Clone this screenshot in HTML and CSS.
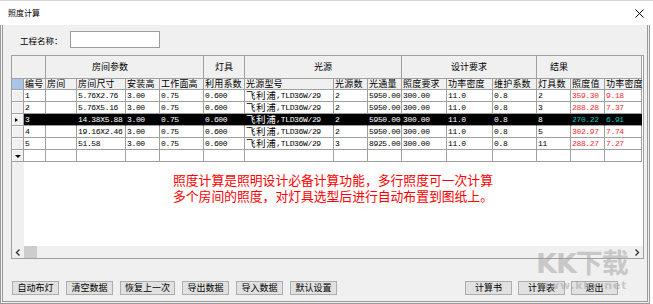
FILE: index.html
```html
<!DOCTYPE html>
<html lang="zh-CN">
<head>
    <meta charset="UTF-8">
    <title>照度计算</title>
    <link rel="stylesheet" href="styles.css">
</head>
<body>
    <div class="window">
        <div class="titlebar">
            <span class="title">照度计算</span>
            <svg class="close" width="9" height="9" viewBox="0 0 9 9">
                <path d="M0.5 0.5 L8.5 8.5 M8.5 0.5 L0.5 8.5" stroke="#000" stroke-width="1" fill="none"/>
            </svg>
        </div>

        <div class="client">
            <div class="project-row">
                <label class="project-label" for="projectName">工程名称：</label>
                <input class="project-input" id="projectName" type="text">
            </div>

            <div class="grid">
                <div class="grid-table">
                    <div class="c gh span2"></div>
                    <div class="c gh span4 gh-room">房间参数</div>
                    <div class="c gh">灯具</div>
                    <div class="c gh span3">光源</div>
                    <div class="c gh span3">设计要求</div>
                    <div class="c gh span3 gh-result">结果</div>

                    <div class="c rh rh-corner"></div>
                    <div class="c ch">编号</div>
                    <div class="c ch">房间</div>
                    <div class="c ch">房间尺寸</div>
                    <div class="c ch">安装高</div>
                    <div class="c ch">工作面高</div>
                    <div class="c ch">利用系数</div>
                    <div class="c ch">光源型号</div>
                    <div class="c ch">光源数</div>
                    <div class="c ch">光通量</div>
                    <div class="c ch">照度要求</div>
                    <div class="c ch">功率密度</div>
                    <div class="c ch">维护系数</div>
                    <div class="c ch">灯具数</div>
                    <div class="c ch">照度值</div>
                    <div class="c ch">功率密度</div>

                    <div class="row">
                        <div class="c rh"></div>
                        <div class="c">1</div><div class="c"></div><div class="c">5.76X2.76</div>
                        <div class="c">3.00</div><div class="c">0.75</div><div class="c">0.600</div>
                        <div class="c"><span class="cn">飞利浦</span>,TLD36W/29</div>
                        <div class="c">2</div><div class="c">5950.00</div><div class="c">300.00</div>
                        <div class="c">11.0</div><div class="c">0.8</div><div class="c">2</div>
                        <div class="c res">359.30</div><div class="c res">9.18</div>
                    </div>
                    <div class="row">
                        <div class="c rh"></div>
                        <div class="c">2</div><div class="c"></div><div class="c">5.76X5.16</div>
                        <div class="c">3.00</div><div class="c">0.75</div><div class="c">0.600</div>
                        <div class="c"><span class="cn">飞利浦</span>,TLD36W/29</div>
                        <div class="c">2</div><div class="c">5950.00</div><div class="c">300.00</div>
                        <div class="c">11.0</div><div class="c">0.8</div><div class="c">3</div>
                        <div class="c res">288.28</div><div class="c res">7.37</div>
                    </div>
                    <div class="row sel">
                        <div class="c rh"><span class="tri-right"></span></div>
                        <div class="c">3</div><div class="c"></div><div class="c">14.38X5.88</div>
                        <div class="c">3.00</div><div class="c">0.75</div><div class="c">0.600</div>
                        <div class="c"><span class="cn">飞利浦</span>,TLD36W/29</div>
                        <div class="c">2</div><div class="c">5950.00</div><div class="c">300.00</div>
                        <div class="c">11.0</div><div class="c">0.8</div><div class="c">8</div>
                        <div class="c res">270.22</div><div class="c res">6.91</div>
                    </div>
                    <div class="row">
                        <div class="c rh"></div>
                        <div class="c">4</div><div class="c"></div><div class="c">19.16X2.46</div>
                        <div class="c">3.00</div><div class="c">0.75</div><div class="c">0.600</div>
                        <div class="c"><span class="cn">飞利浦</span>,TLD36W/29</div>
                        <div class="c">2</div><div class="c">5950.00</div><div class="c">300.00</div>
                        <div class="c">11.0</div><div class="c">0.8</div><div class="c">5</div>
                        <div class="c res">302.97</div><div class="c res">7.74</div>
                    </div>
                    <div class="row">
                        <div class="c rh"></div>
                        <div class="c">5</div><div class="c"></div><div class="c">51.58</div>
                        <div class="c">3.00</div><div class="c">0.75</div><div class="c">0.600</div>
                        <div class="c"><span class="cn">飞利浦</span>,TLD36W/29</div>
                        <div class="c">3</div><div class="c">8925.00</div><div class="c">300.00</div>
                        <div class="c">11.0</div><div class="c">0.8</div><div class="c">11</div>
                        <div class="c res">288.27</div><div class="c res">7.27</div>
                    </div>
                    <div class="row">
                        <div class="c rh"><span class="tri-down"></span></div>
                        <div class="c"></div><div class="c"></div><div class="c"></div>
                        <div class="c"></div><div class="c"></div><div class="c"></div>
                        <div class="c"></div><div class="c"></div><div class="c"></div>
                        <div class="c"></div><div class="c"></div><div class="c"></div>
                        <div class="c"></div><div class="c"></div><div class="c"></div>
                    </div>
                </div>

                <div class="grid-empty">
                    <div class="row-strip"></div>
                    <div class="note">
                        <p>照度计算是照明设计必备计算功能，多行照度可一次计算</p>
                        <p>多个房间的照度，对灯具选型后进行自动布置到图纸上。</p>
                    </div>
                </div>

                <div class="hscroll">
                    <div class="scroll-btn">
                        <svg width="6" height="7" viewBox="0 0 6 7"><path d="M4.5 0.5 L1.5 3.5 L4.5 6.5" stroke="#333" stroke-width="1.4" fill="none"/></svg>
                    </div>
                    <div class="scroll-thumb"></div>
                    <div class="scroll-track"></div>
                    <div class="scroll-btn">
                        <svg width="6" height="7" viewBox="0 0 6 7"><path d="M1.5 0.5 L4.5 3.5 L1.5 6.5" stroke="#333" stroke-width="1.4" fill="none"/></svg>
                    </div>
                </div>
            </div>

            <div class="buttons">
                <div class="btn-group">
                    <button class="btn">自动布灯</button>
                    <button class="btn">清空数据</button>
                    <button class="btn btn-wide">恢复上一次</button>
                    <button class="btn">导出数据</button>
                    <button class="btn">导入数据</button>
                    <button class="btn">默认设置</button>
                </div>
                <div class="btn-group btn-group-right">
                    <button class="btn">计算书</button>
                    <button class="btn">计算表</button>
                    <button class="btn">退出</button>
                </div>
            </div>
        </div>

        <div class="watermark">
            <div class="wm-logo">KK下载</div>
            <div class="wm-url">www.kkx.net</div>
        </div>
    </div>
</body>
</html>
```

FILE: styles.css
```css
:root {
    --face: #f0f0f0;
    --line: #a0a0a0;
    --frame: #9a9a9a;
    --btn-bg: #e1e1e1;
    --btn-border: #adadad;
    --result: #ff2a2a;
    --result-sel: #00c0c0;
    --note: #ff0000;
}

html, body {
    margin: 0;
    padding: 0;
    background: #ffffff;
}

body {
    width: 653px;
    height: 304px;
    overflow: hidden;
    font-family: "Noto Sans CJK SC", sans-serif;
    color: #000;
}

.window {
    position: relative;
    width: 653px;
    height: 304px;
    display: flex;
    flex-direction: column;
}

.titlebar {
    height: 25px;
    box-sizing: border-box;
    border-top: 1px solid #d4d4d4;
    display: flex;
    align-items: center;
    justify-content: space-between;
    padding: 0 9px 0 8px;
    background: #ffffff;
}

.title {
    font-size: 8px;
    line-height: 10px;
}

.close {
    display: block;
}

.client {
    flex: 1;
    margin-right: 3px;
    background: var(--face);
    border: 3px double var(--frame);
    border-top: none;
    display: flex;
    flex-direction: column;
    padding-top: 6px;
}

.project-row {
    display: flex;
    align-items: center;
    height: 17px;
    padding-left: 17px;
}

.project-label {
    font-size: 8.5px;
    width: 50px;
    line-height: 10px;
}

.project-input {
    width: 90px;
    height: 17px;
    box-sizing: border-box;
    border: 1px solid #9c9c9c;
    background: #fff;
    padding: 0;
    margin: 0;
}

/* data grid */

.grid {
    margin: 7px 0 0 8px;
    width: 633px;
    height: 204px;
    box-sizing: border-box;
    border: 1px solid var(--line);
    background: #fff;
    display: flex;
    flex-direction: column;
}

.grid-table {
    display: grid;
    grid-template-columns: 12px 22px 31px 49px 34px 44px 41px 89px 34px 34px 45px 46px 44px 34px 34px 37px;
    grid-template-rows: 23px 11px repeat(6, 12px);
}

.row {
    display: contents;
}

.c {
    box-sizing: border-box;
    border-right: 1px solid var(--line);
    border-bottom: 1px solid var(--line);
    padding-left: 1px;
    white-space: nowrap;
    font-family: "Liberation Mono", "Noto Sans CJK SC", monospace;
    font-size: 8px;
    letter-spacing: -0.35px;
    line-height: 11px;
    background: #fff;
}

.cn {
    display: inline-block;
    vertical-align: top;
    font-family: "Noto Sans CJK SC", sans-serif;
    font-size: 9.5px;
    line-height: 11px;
    letter-spacing: 0.6px;
}

.gh {
    background: var(--face);
    font-family: "Noto Sans CJK SC", sans-serif;
    font-size: 9px;
    letter-spacing: 0;
    line-height: 22px;
    text-align: center;
    padding: 0;
}

.span2 { grid-column: span 2; }
.span3 { grid-column: span 3; }
.span4 { grid-column: span 4; }

.gh-room {
    text-align: left;
    padding-left: 46px;
}

.gh-result {
    text-align: left;
    padding-left: 13px;
}

.ch {
    background: var(--face);
    font-family: "Noto Sans CJK SC", sans-serif;
    font-size: 9px;
    letter-spacing: 0.2px;
    line-height: 10px;
}

.rh {
    background: var(--face);
    box-shadow: inset 1px 1px 0 #ffffff;
    padding: 0;
    display: flex;
    align-items: center;
    justify-content: center;
}

.rh-corner {
    background: #a9c6ea;
    box-shadow: none;
}

.res {
    color: var(--result);
}

.sel .c {
    background: #000;
    color: #fff;
    border-right-color: #000;
}

.sel .rh {
    background: var(--face);
    border-right-color: var(--line);
}

.sel .res {
    color: var(--result-sel);
}

.tri-right {
    width: 0;
    height: 0;
    border-top: 2.5px solid transparent;
    border-bottom: 2.5px solid transparent;
    border-left: 3px solid #000;
    margin-left: -2px;
}

.tri-down {
    width: 0;
    height: 0;
    border-left: 3px solid transparent;
    border-right: 3px solid transparent;
    border-top: 3px solid #000;
    margin-top: 2px;
}

.grid-empty {
    flex: 1;
    display: flex;
}

.row-strip {
    width: 12px;
    background: var(--face);
}

.note {
    padding: 10px 0 0 149px;
    color: var(--note);
    font-size: 12.8px;
    line-height: 15.5px;
}

.note p {
    margin: 0;
    white-space: nowrap;
}

.hscroll {
    height: 12px;
    display: flex;
    background: var(--face);
}

.scroll-btn {
    width: 12px;
    display: flex;
    align-items: center;
    justify-content: center;
}

.scroll-thumb {
    width: 13px;
    background: #cdcdcd;
}

.scroll-track {
    flex: 1;
}

/* bottom buttons */

.buttons {
    margin-top: 22px;
    padding-left: 9px;
    padding-right: 29px;
    display: flex;
    justify-content: space-between;
}

.btn-group {
    display: flex;
    gap: 7px;
}

.btn-group-right {
    gap: 6px;
}

.btn {
    width: 47px;
    height: 14px;
    box-sizing: border-box;
    padding: 0;
    margin: 0;
    background: var(--btn-bg);
    border: 1px solid var(--btn-border);
    font-family: "Noto Sans CJK SC", sans-serif;
    font-size: 9px;
    line-height: 12px;
    color: #000;
}

.btn-wide {
    width: 55px;
}

/* site watermark on top of the shot */

.watermark {
    position: absolute;
    left: 536px;
    top: 248px;
    color: rgba(150, 150, 150, 0.45);
    font-family: "DejaVu Sans", "Noto Sans CJK SC", sans-serif;
    font-weight: bold;
    pointer-events: none;
}

.wm-logo {
    font-size: 27px;
    line-height: 32px;
    letter-spacing: -1px;
}

.wm-url {
    font-size: 11px;
    line-height: 12px;
    letter-spacing: 0.8px;
    margin-left: 2px;
}
```
